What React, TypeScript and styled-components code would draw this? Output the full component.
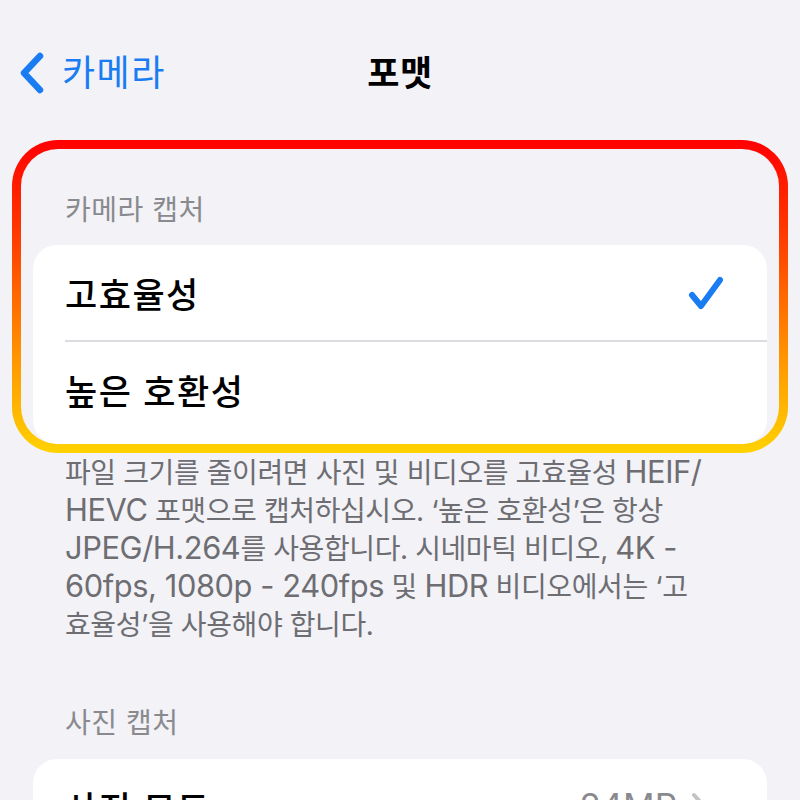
import styled, { createGlobalStyle } from "styled-components";

const GlobalStyle = createGlobalStyle`
body {
    margin: 0;
    background: #f2f2f7;
    font-family: Inter, "Noto Sans CJK KR", "Noto Sans", sans-serif;
}
`

const Page = styled.div`
width: 800px;
height: 800px;
overflow: hidden;
background: #f2f2f7;
`

const NavBar = styled.div`
display: grid;
grid-template-columns: 1fr auto 1fr;
align-items: center;
height: 46px;
padding-top: 50px;
margin-bottom: 44px;
`

const BackButton = styled.a`
display: flex;
align-items: center;
gap: 16px;
padding-left: 18px;
color: #1a7cf2;
font-size: 36px;
letter-spacing: 1.5px;
line-height: 1;
text-decoration: none;
`

const Title = styled.h1`
margin: 0;
font-size: 35px;
font-weight: 700;
letter-spacing: 0.5px;
color: #000;
line-height: 1;
`

const Highlight = styled.section`
margin: 0 12px;
padding: 9px;
border-radius: 46px;
background: linear-gradient(to bottom, #ff0000 0%, #ff3a00 30%, #ff9600 70%, #ffd200 100%);
`

const HighlightInner = styled.div`
background: #f2f2f7;
border-radius: 37px;
padding: 0 12px;
overflow: hidden;
`

const SectionHeader = styled.div<{ $top: number; $bottom: number }>`
padding: ${p => p.$top}px 0 ${p => p.$bottom}px 32px;
font-size: 28px;
letter-spacing: 0.5px;
line-height: 34px;
color: #8a8a8e;
`

const Card = styled.div<{ $extra?: number }>`
background: #fff;
border-radius: 24px;
padding-bottom: ${p => p.$extra ?? 0}px;
`

const Row = styled.div<{ $right?: number }>`
display: flex;
align-items: center;
justify-content: space-between;
height: 95px;
padding: 0 ${p => p.$right ?? 42}px 0 32px;
`

const RowLabel = styled.span`
font-size: 35px;
font-weight: 500;
letter-spacing: 1.5px;
color: #000;
`

const RowValue = styled.span`
display: flex;
align-items: center;
gap: 14px;
font-size: 35px;
color: #8a8a8e;
`

const Divider = styled.div`
height: 1.5px;
margin-left: 32px;
background: #dcdce0;
`

const FootNote = styled.p`
margin: 0;
padding: 1px 20px 0 65px;
font-size: 28px;
letter-spacing: -0.4px;
line-height: 38px;
color: #6d6d72;
white-space: nowrap;
`

// latin runs are set a touch larger, as in the iOS system font
const Latin = styled.span`
font-size: 1.1em;
line-height: 1;
`

const PhotoSection = styled.div`
margin: 0 33px;
`

function Chevron() {
    return <svg width="28" height="44" viewBox="0 0 28 44">
        <path d="M22 5 L6 22 L22 39" fill="none" stroke="#1a7cf2" strokeWidth="6.5" strokeLinecap="round" strokeLinejoin="round" />
    </svg>
}

function Check() {
    return <svg width="38" height="36" viewBox="0 0 38 36">
        <path d="M5 20 L14 31 L33 5" fill="none" stroke="#1a7cf2" strokeWidth="6" strokeLinecap="round" strokeLinejoin="round" />
    </svg>
}

function Disclosure() {
    return <svg width="16" height="28" viewBox="0 0 16 28">
        <path d="M3 3 L13 14 L3 25" fill="none" stroke="#c4c4c7" strokeWidth="4" strokeLinecap="round" strokeLinejoin="round" />
    </svg>
}

export default function App() {
    return <Page>
        <GlobalStyle />
        <NavBar>
            <BackButton href="#">
                <Chevron />
                카메라
            </BackButton>
            <Title>포맷</Title>
            <div />
        </NavBar>
        <Highlight>
            <HighlightInner>
                <SectionHeader $top={44} $bottom={18}>카메라 캡처</SectionHeader>
                <Card $extra={7}>
                    <Row>
                        <RowLabel>고효율성</RowLabel>
                        <Check />
                    </Row>
                    <Divider />
                    <Row>
                        <RowLabel>높은 호환성</RowLabel>
                    </Row>
                </Card>
            </HighlightInner>
        </Highlight>
        <FootNote>
            파일 크기를 줄이려면 사진 및 비디오를 고효율성 <Latin>HEIF/</Latin><br />
            <Latin>HEVC</Latin> 포맷으로 캡처하십시오. ‘높은 호환성’은 항상<br />
            <Latin>JPEG/H.264</Latin>를 사용합니다. 시네마틱 비디오, <Latin>4K -</Latin><br />
            <Latin>60fps, 1080p - 240fps</Latin> 및 <Latin>HDR</Latin> 비디오에서는 ‘고<br />
            효율성’을 사용해야 합니다.
        </FootNote>
        <PhotoSection>
            <SectionHeader $top={62} $bottom={19}>사진 캡처</SectionHeader>
            <Card>
                <Row $right={60}>
                    <RowLabel>사진 모드</RowLabel>
                    <RowValue>24MP<Disclosure /></RowValue>
                </Row>
            </Card>
        </PhotoSection>
    </Page>
}
